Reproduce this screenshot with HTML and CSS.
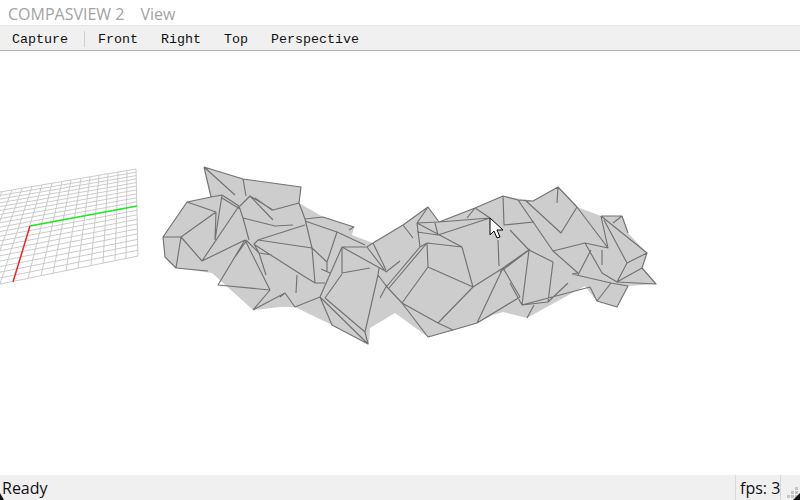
FILE: index.html
```html
<!DOCTYPE html>
<html lang="en">
<head>
<meta charset="utf-8">
<title>COMPASVIEW 2</title>
<link rel="stylesheet" href="styles.css">
</head>
<body>
<div class="app">
  <header class="titlebar">
    <span class="app-name">COMPASVIEW 2</span>
    <span class="menu-item">View</span>
  </header>
  <nav class="toolbar">
    <span class="tool tool-first">Capture</span>
    <span class="tool-sep"></span>
    <span class="tool">Front</span>
    <span class="tool">Right</span>
    <span class="tool">Top</span>
    <span class="tool">Perspective</span>
  </nav>
  <main class="viewport">
    <svg class="scene" viewBox="0 51 800 424" width="800" height="424" aria-label="3D view of a mesh">
      <path class="grid" d="M136 169L0 192M136 172.3L0 195.5M136 175.6L0 199.1M136 179L0 202.8M136 182.6L0 206.6M136 186.2L0 210.5M136 190L0 214.5M137 193.8L0 218.6M137 197.7L0 222.8M137 201.8L0 227.2M137 206L0 231.6M137 210.3L0 236.2M137 214.8L0 240.9M137 219.4L0 245.7M137 224.1L0 250.7M137 229L0 255.8M137 234L0 261.1M138 239.3L0 266.6M138 244.7L0 272.2M138 250.2L0 278M138 256L0 284"/>
      <path class="grid" d="M136 169L138 256M127 170.5L126 258.4M118 172L115 260.7M108 173.7L103 263.1M99 175.3L91 265.5M90 176.8L78 268.2M81 178.3L66 270.6M71 180L53 273.2M62 181.5L41 275.7M52 183.2L28 278.3M42 184.9L13 281.4M32 186.6L0 284M22 188.3L-13 286.6M12 190L-27 289.5M2 191.7L-41 292.3"/>
      <path class="axis-x" d="M30 226L13 282"/>
      <path class="axis-y" d="M30 226L137 206"/>
      <polygon class="mesh-fill" points="204,167 243,179 301,187 299,203 323,217 354,227 352,235 373,243 403,225 428,207 439,222 475,208 503,196 533,201 558,187 577,207 601,216 622,216 628,233 647,253 642,268 656,284 628,286 617,307 597,301 592,295 585,286 527,318 503,312 493,315 477,323 453,330 428,337 395,313 370,328 369,344 332,325 295,307 280,307 253,310 212,273 176,268 165,257 163,237 187,202 211,197"/>
      <path class="mesh-edges" d="M204 167L243 179M204 167L211 197M204 167L235 195M243 179L246 196M243 179L301 187L299 203L273 210L250 196L240 206M250 196L273 220M255 198L272 210M187 202L211 197L222 195M187 202L216 212M187 202L163 237L181 237M163 237L165 257L176 268L181 237M181 237L216 212M181 237L202 261M216 212L215 240M222 195L215 240M222 195L239 206M222 198L240 209M202 261L239 206M202 261L245 240M245 240L218 285L270 290L253 310M245 240L270 290M176 268L208 271M239 206L243 218L249 240M243 218L275 226L293 225M299 203L305 219L312 248L315 283L325 283M305 219L323 217L354 227L349 230M305 221L337 232L327 262L327 272M337 232L365 245M258 240L305 225M258 240L312 248L327 262M258 240L254 244L259 253L272 255M259 253L266 275M246 240L259 253M247 240L235 257M255 245L302 275L315 283M297 275L296 293M321 269L330 273M253 310L285 293L295 307L320 297L332 325L368 344L365 332L378 275L379 268M285 293L280 297M320 297L342 247L342 273L370 268M325 298L342 274M325 298L365 332M320 297L368 344M342 247L367 247L373 243M342 247L387 272M367 247L386 272M373 243L386 270M378 275L387 287M400 261L386 272M387 286L420 247M389 288L427 243M387 285L380 298M373 243L403 225L428 207L439 222L475 208M403 225L413 238M417 223L420 247L427 243L462 247L473 287L428 267L402 303L387 287M417 223L428 207M417 223L462 247M417 232L438 235M417 223L439 222L490 218M435 223L438 235L490 218M427 243L428 267M402 303L438 323L473 287M402 303L428 337L453 330L477 323L503 268M438 323L453 330M473 287L503 268L530 249M503 268L520 297M477 323L520 297M467 218L475 208L490 218M475 208L503 196L518 200L533 201L558 187L577 207M503 196L504 225L534 222M499 266L498 240M558 187L557 203M577 207L561 233L525 200M518 200L553 251L585 243L608 248L577 207M510 230L529 250L553 262M529 250L522 305L548 302L553 262M529 250L500 272M510 283L522 305L590 287M553 251L578 273M585 243L602 273L617 282M591 250L578 275M602 250L602 265M548 302L568 283M534 305L527 318M601 216L608 248M601 216L622 216L628 233M601 216L647 253L627 263L617 282L642 268L656 284L617 282M613 223L622 216M604 220L627 263M647 253L642 268M572 274L611 283L628 286L617 307L597 301L611 283M572 274L578 273M590 287L597 301"/>
      <path class="cursor" d="M490 218v17l4-4l3 7l3-1l-3-7h6z"/>
    </svg>
  </main>
  <footer class="statusbar">
    <span class="status-msg">Ready</span>
    <span class="status-fps">fps: 3</span>
    <span class="grip">
      <svg class="grip-icon" viewBox="0 0 19 25" width="19" height="25" aria-hidden="true">
        <path class="grip-dots" d="M14 12h3v3h-3zM10 16h3v3h-3zM14 16h3v3h-3zM6 20h3v3H6zM10 20h3v3h-3zM14 20h3v3h-3z"/>
        <path class="corner" d="M19 18v7h-7z"/>
      </svg>
    </span>
    <svg class="corner-left" viewBox="0 0 4 7" width="4" height="7" aria-hidden="true"><path class="corner" d="M0 0L4 7H0z"/></svg>
  </footer>
</div>
</body>
</html>
```
FILE: styles.css
```css
* { box-sizing: border-box; }
html, body { margin: 0; height: 100%; overflow: hidden; background: #fff; }
.app { width: 800px; height: 500px; display: flex; flex-direction: column; }

.titlebar {
  height: 26px; flex: none; display: flex; align-items: center; gap: 16px; padding: 2px 0 0 8px;
  background: #fff; border-bottom: 1px solid #e6e6e6;
  font: 16px "Open Sans", sans-serif; color: #a3a3a3;
}

.toolbar {
  height: 25px; flex: none; display: flex; align-items: center; padding: 2px 0 0 12px;
  background: #f0f0f0; border-bottom: 1px solid #b4b4b4;
  font: 13.33px "Liberation Mono", monospace; color: #111;
}
.tool { margin-right: 23px; }
.tool-first { margin-right: 16px; }
.tool-sep { width: 1px; height: 16px; background: #cfcfcf; margin-right: 13px; }

.viewport { flex: 1; min-height: 0; background: #fff; }
.scene { display: block; }
.grid { fill: none; stroke: #cbcbcb; stroke-width: 1; }
.axis-x { fill: none; stroke: #ff1a1a; stroke-width: 1.4; }
.axis-y { fill: none; stroke: #1aef1a; stroke-width: 1.4; }
.mesh-fill { fill: #cdcdcd; }
.mesh-edges { fill: none; stroke: #727272; stroke-width: 1.15; stroke-linejoin: round; }
.cursor { fill: #fff; stroke: #000; stroke-width: 1; }

.statusbar {
  position: relative; height: 25px; flex: none; display: flex; align-items: center; padding-left: 2px;
  background: #f0f0f0;
  font: 16px "Open Sans", sans-serif; color: #111;
}
.status-msg { flex: 1; }
.status-fps { flex: none; width: 46px; height: 100%; padding-left: 4px; line-height: 27px; white-space: nowrap; border-left: 1px solid #d8d8d8; border-right: 1px solid #d8d8d8; }
.grip { flex: none; width: 19px; height: 100%; }
.grip-icon { display: block; }
.grip-dots { fill: #c4c4c4; }
.corner { fill: #111; }
.corner-left { position: absolute; left: 0; bottom: 0; }
```
